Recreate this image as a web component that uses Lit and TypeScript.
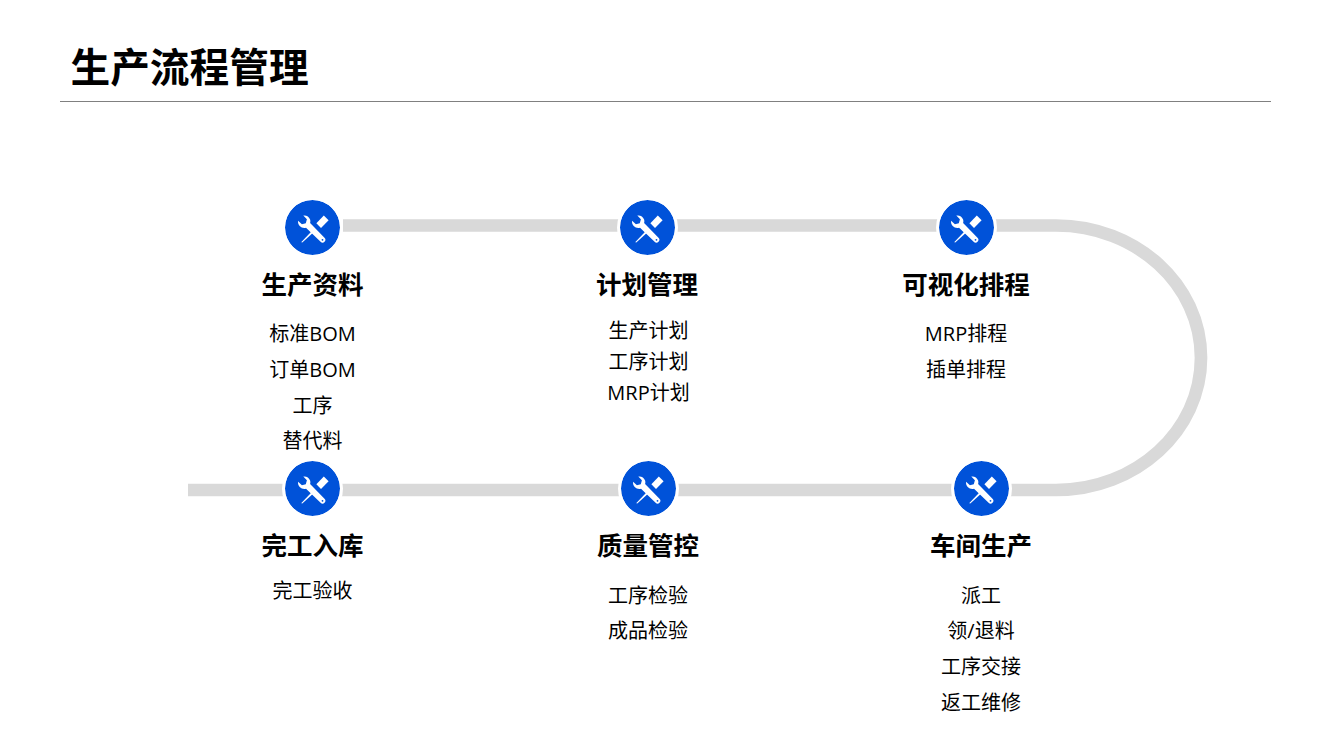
import { LitElement, html, css, svg } from "lit";
import { customElement } from "lit/decorators.js";

interface Step { x: number; y: number; title: string; items: string[]; lh: number; gap: number; inset?: number; }

const STEPS: Step[] = [
  { x: 312.5, y: 227.5, title: "生产资料", items: ["标准BOM", "订单BOM", "工序", "替代料"], lh: 35.7, gap: 14.8 },
  { x: 647, y: 227.5, title: "计划管理", items: ["生产计划", "工序计划", "MRP计划"], lh: 31, gap: 13, inset: 3 },
  { x: 966, y: 227.5, title: "可视化排程", items: ["MRP排程", "插单排程"], lh: 35.7, gap: 14.8 },
  { x: 312.5, y: 488.5, title: "完工入库", items: ["完工验收"], lh: 35.7, gap: 10 },
  { x: 648, y: 488.5, title: "质量管控", items: ["工序检验", "成品检验"], lh: 35.7, gap: 15.2 },
  { x: 981, y: 488.5, title: "车间生产", items: ["派工", "领/退料", "工序交接", "返工维修"], lh: 35.7, gap: 15.2 },
];

const icon = svg`<svg class="icon" viewBox="0 0 32 32" aria-hidden="true">
  <path fill="#fff" d="M6.300 3.600C9.300 3.100 12.100 4.700 13.100 7.600C13.500 8.900 13.400 10.200 13.100 11.100L27.500 25.800A2.700 2.700 0 0 1 23.600 29.700L9 15.700C6.900 16.400 4.300 15.700 2.700 14C1.300 12.600 .8 10.600 1.100 8.800L4.900 12.200L8.800 11.200L9.900 7.300Z"/>
  <circle cx="25.500" cy="27.800" r=".9" fill="#0052d9"/>
  <path fill="#fff" d="M4.900 30.500L4.400 29.900L14.900 19.100L16.300 20.500L5.600 30.200Z"/>
  <path fill="#fff" d="M19.400 11.300L26.800 3.500L31.600 8.300L24 15.900Z"/>
</svg>`;

@customElement("app-root")
export class AppRoot extends LitElement {
  static styles = css`
    :host {
      display: block;
      width: 1335px;
      height: 735px;
      background: #fff;
      overflow: hidden;
      color: #000;
      font-family: "Open Sans", "Noto Sans CJK SC", sans-serif;
    }
    .header {
      margin: 0 64px 0 60px;
      height: 102px;
      box-sizing: border-box;
      padding: 36px 0 0 10.500px;
      border-bottom: 1px solid #808080;
    }
    h1 {
      margin: 0;
      font-family: "Noto Sans CJK SC", sans-serif;
      font-size: 39.700px;
      line-height: 58px;
      font-weight: 700;
    }
    .canvas {
      position: relative;
      height: 633px;
    }
    .track {
      position: absolute;
      left: 0;
      top: -102px;
      width: 1335px;
      height: 735px;
    }
    .track path {
      fill: none;
      stroke: #d9d9d9;
      stroke-width: 12.7px;
    }
    .step {
      position: absolute;
      width: 240px;
      margin-left: -120px;
      margin-top: -30.500px;
      display: flex;
      flex-direction: column;
      align-items: center;
    }
    .badge {
      width: 55px;
      height: 55px;
      box-sizing: content-box;
      border: 3px solid #fff;
      border-radius: 50%;
      background: #0052d9;
      background-clip: padding-box;
      display: flex;
      align-items: center;
      justify-content: center;
    }
    .icon {
      width: 32px;
      height: 32px;
      display: block;
    }
    h2 {
      margin: 5.500px 0 0;
      font-family: "Noto Sans CJK SC", sans-serif;
      font-size: 25.500px;
      line-height: 38px;
      font-weight: 700;
      white-space: nowrap;
    }
    ul {
      list-style: none;
      margin: 0;
      padding: 0;
      font-size: 20px;
      text-align: center;
      white-space: nowrap;
    }
  `;

  render() {
    return html`
      <div class="header"><h1>生产流程管理</h1></div>
      <div class="canvas">
        <svg class="track" viewBox="0 0 1335 735" aria-hidden="true">
          <path d="M343 225.500H1056C1136 225.500 1201 284.500 1201 357.800C1201 431 1136 490 1056 490H188"></path>
        </svg>
        ${STEPS.map(
          (s) => html`
            <div class="step" style="left:${s.x}px;top:${s.y - 102}px">
              <div class="badge">${icon}</div>
              <h2>${s.title}</h2>
              <ul style="margin-top:${s.gap}px;line-height:${s.lh}px;padding-left:${s.inset ?? 0}px">
                ${s.items.map((i) => html`<li>${i}</li>`)}
              </ul>
            </div>
          `
        )}
      </div>
    `;
  }
}
